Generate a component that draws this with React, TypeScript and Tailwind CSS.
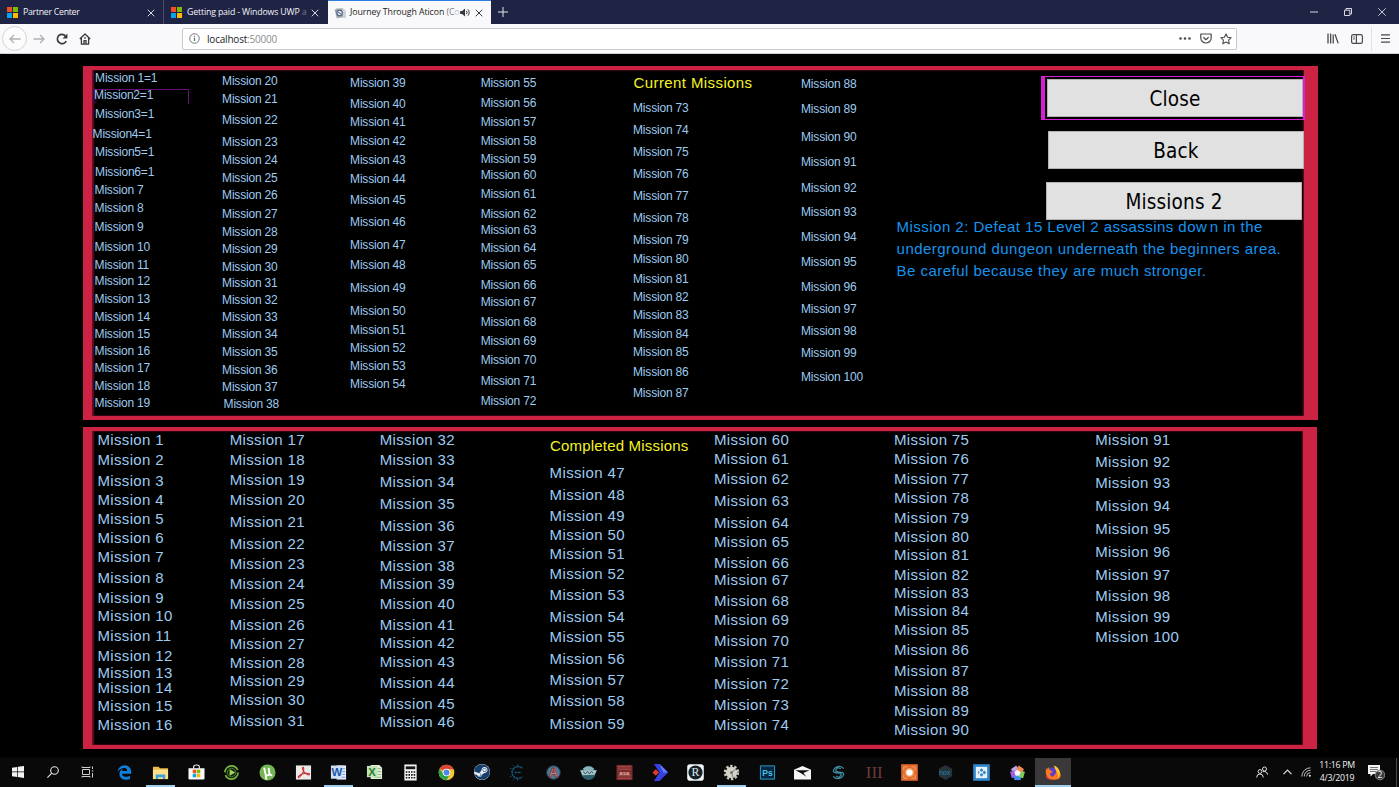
import type { ReactNode } from "react";
import { FaEdgeLegacy, FaSteam } from "react-icons/fa";
import clsx from "clsx";

type Entry = { label: string; y: number; shift?: number };

// Vertical centres are stage coordinates, one list per column
function missions(first: number, centres: number[]): Entry[] {
  return centres.map((y, i) => ({ label: `Mission ${first + i}`, y }));
}

const CURRENT_LEFT: Entry[] = [
  { label: "Mission 1=1", y: 77.5, shift: 0.5 },
  { label: "Mission2=1", y: 94.5, shift: -0.5 },
  { label: "Mission3=1", y: 114, shift: 0.5 },
  { label: "Mission4=1", y: 133.5, shift: -2 },
  { label: "Mission5=1", y: 152, shift: 0.5 },
  { label: "Mission6=1", y: 171.5, shift: 0.5 },
  ...missions(7, [190, 208, 227, 246.5, 264.5, 281, 299, 317, 333.5, 351, 368, 386, 402.5])
];

const CURRENT_20 = missions(
  20,
  [81, 99, 120, 142, 160, 178, 195, 214, 231.5, 249, 266.5, 282.5, 299.5, 316.5, 333.5, 351.5, 370, 386.5, 404]
).map((m) => (m.label === "Mission 38" ? { ...m, shift: 1.5 } : m));
const CURRENT_39 = missions(39, [83, 104, 122, 140.5, 160, 179, 200, 221.5, 244.5, 265, 288, 310.5, 330, 348, 366, 384]);
const CURRENT_55 = missions(
  55,
  [83, 102.5, 122, 141, 158.5, 174.5, 194, 213.5, 230, 248, 264.5, 284.5, 302, 322, 340.5, 359.5, 381, 401]
);
const CURRENT_73 = missions(73, [107.5, 130, 152, 174, 196, 217.5, 239.5, 258.5, 279, 296.5, 314.5, 333.5, 352, 372, 392.5]);
const CURRENT_88 = missions(88, [84, 109, 136.5, 162, 187.5, 211.5, 237, 262, 287, 309, 330.5, 353, 377]);

const DONE_1 = missions(1, [439.5, 460, 481, 500, 519, 538, 557, 578, 598, 616, 636, 656, 673, 688, 706, 725]);
const DONE_17 = missions(17, [439.5, 460, 480, 500, 522, 544, 564, 584, 604, 625, 644, 663, 681, 700, 721]);
const DONE_32 = missions(32, [439.5, 460, 482, 504, 526, 546, 566, 584, 604, 625, 643, 662, 683, 704, 722]);
const DONE_47 = missions(47, [473, 495, 516, 535, 554, 574, 595, 617, 637, 659, 680, 701, 723.5]);
const DONE_60 = missions(60, [439.5, 459, 479, 501, 523, 542, 563, 580, 601, 620, 641, 662, 684, 705, 725]);
const DONE_75 = missions(75, [439.5, 458.5, 479, 498, 517.5, 537, 555, 575, 593, 610.5, 630, 650, 671, 691, 711, 730]);
const DONE_91 = missions(91, [439.5, 462, 483, 506, 529, 552, 575, 596, 617, 637]);

const LINE = 16;

function MissionColumn({
  entries,
  top,
  heading,
  headingY = 0,
  headingClass
}: {
  entries: Entry[];
  top: number;
  heading?: string;
  headingY?: number;
  headingClass?: string;
}) {
  const rows: Entry[] = heading ? [{ label: heading, y: headingY, shift: 0.5 }, ...entries] : entries;
  return (
    <div className="flex flex-col items-start whitespace-nowrap">
      {rows.map((row, i) => {
        const prev = i === 0 ? top : rows[i - 1].y + LINE / 2;
        return (
          <span
            key={row.label}
            className={clsx("relative block h-4 leading-4", row.label === heading && ["text-[15px] text-[#f4f424]", headingClass])}
            style={{ marginTop: row.y - LINE / 2 - prev, marginLeft: row.shift ?? 0 }}
          >
            {row.label === "Mission2=1" && (
              <span className="absolute -left-px top-[2px] h-[15px] w-24 border-t border-r border-[#6a1178] bg-[linear-gradient(90deg,#3c0a45,transparent_5px)]" />
            )}
            <span className="relative">{row.label}</span>
          </span>
        );
      })}
    </div>
  );
}

function TabClose({ dark = false }: { dark?: boolean }) {
  return (
    <svg viewBox="0 0 8 8" className="size-[8px] shrink-0" fill="none" stroke={dark ? "#3a3a3e" : "#d5d6e2"} strokeWidth="1">
      <path d="M.7.7l6.6 6.6M7.3.7L.7 7.3" />
    </svg>
  );
}

function MicrosoftLogo() {
  return (
    <span className="grid size-[11px] shrink-0 grid-cols-2 gap-px">
      <span className="bg-[#f25022]" />
      <span className="bg-[#7fba00]" />
      <span className="bg-[#00a4ef]" />
      <span className="bg-[#ffb900]" />
    </span>
  );
}

function TabBar() {
  return (
    <div className="flex h-6 shrink-0 bg-[#1f2344] text-[8.75px] font-medium tracking-[-0.27px] whitespace-nowrap text-[#f4f4f8]">
      <div className="flex w-[164px] items-center border-r border-[#4a4d68] pt-px pr-[8px] pl-[7px]">
        <MicrosoftLogo />
        <span className="ml-[5px] flex-1">Partner Center</span>
        <TabClose />
      </div>
      <div className="flex w-[164px] items-center pt-px pr-[9px] pl-[7px]">
        <MicrosoftLogo />
        <span className="ml-[5px] tracking-[-0.15px]">
          Getting paid - Windows UWP <span className="text-[#73768c]">a</span>
        </span>
        <span className="ml-auto flex">
          <TabClose />
        </span>
      </div>
      <div className="flex w-[163px] items-center border-t border-[#2a7de1] bg-[#f9f9fb] pr-[8px] pl-[6px] text-[#1c1c20]">
        <svg viewBox="0 0 12 12" className="size-[12px] shrink-0">
          <path d="M2 1h7l3 3v7H3z" fill="#cfd3d8" />
          <path d="M.5 2.5L8 1.5l1 8-6 2z" fill="#9aa4b0" />
          <circle cx="5.6" cy="6" r="2.7" fill="#e8edf3" stroke="#53627a" strokeWidth="1.1" />
          <path d="M4 5l3 2" stroke="#2a5d9f" />
        </svg>
        <span className="ml-[4px] tracking-[-0.08px]">
          Journey Through Aticon <span className="text-[#77777b]">(C</span>
          <span className="text-[#c4c4c8]">o</span>
        </span>
        <svg viewBox="0 0 12 10" className="ml-auto h-[9px] w-[11px] shrink-0">
          <path d="M0 3.2h2.2L5.5.5v9L2.2 6.8H0z" fill="#38383d" />
          <path d="M7 3.2a2.6 2.6 0 010 3.6M8.6 1.4a5 5 0 010 7.2" fill="none" stroke="#38383d" strokeWidth="1.1" />
        </svg>
        <span className="ml-[4px] flex">
          <TabClose dark />
        </span>
      </div>
      <svg viewBox="0 0 10 10" className="mt-[7px] ml-[7px] size-[10px]" stroke="#e4e5ee" strokeWidth="1">
        <path d="M5 0v10M0 5h10" />
      </svg>
      <div className="ml-auto flex items-center pr-[13px]">
        <svg viewBox="0 0 8 8" className="size-[8px]" stroke="#d8d9e4" strokeWidth="1">
          <path d="M0 4h8" />
        </svg>
        <svg viewBox="0 0 8 8" className="ml-[26px] size-[8px]" fill="none" stroke="#d8d9e4" strokeWidth="1">
          <path d="M.5 2.2h5.3v5.3H.5zM2 2V.5h5.5V6H6" />
        </svg>
        <svg viewBox="0 0 8 8" className="ml-[26px] size-[8px]" fill="none" stroke="#d8d9e4" strokeWidth=".9">
          <path d="M.3.3l7.4 7.4M7.7.3L.3 7.7" />
        </svg>
      </div>
    </div>
  );
}

function NavBar() {
  return (
    <div className="flex h-[30px] shrink-0 items-center border-b border-[#d0d0d4] bg-[#f9f9fb]">
      <span className="ml-[2px] flex size-[25px] items-center justify-center rounded-full border border-[#d4d4d6] bg-[#fcfcfd]">
        <svg viewBox="0 0 12 10" className="h-[10px] w-[12px]" fill="none" stroke="#b0b0b3" strokeWidth="1.3">
          <path d="M11.5 5H1M5 1L1 5l4 4" />
        </svg>
      </span>
      <svg viewBox="0 0 12 10" className="ml-[6px] h-[10px] w-[12px]" fill="none" stroke="#b0b0b3" strokeWidth="1.3">
        <path d="M.5 5H11M7 1l4 4-4 4" />
      </svg>
      <svg viewBox="0 0 12 12" className="ml-[11px] size-[12px]" fill="none" stroke="#38383d" strokeWidth="1.6">
        <path d="M10.2 8A4.6 4.6 0 116 1.4c1.6 0 2.8.8 3.7 2" />
        <path d="M11.4.6v4.8H6.6z" fill="#38383d" stroke="none" />
      </svg>
      <svg viewBox="0 0 12 12" className="ml-[11px] size-[12px]" fill="none" stroke="#38383d" strokeWidth="1.3" strokeLinejoin="round">
        <path d="M.8 6L6 1l5.2 5M2.4 5.3v5.9h7.2V5.3" />
        <path d="M5 11V7.6h2V11M5.2 5h1.6" />
      </svg>
      <div className="ml-[91px] flex h-[22px] w-[1055px] items-center rounded-[2px] border border-[#c9c9cd] bg-white">
        <svg viewBox="0 0 12 12" className="ml-[6px] size-[11px]" fill="none" stroke="#6a6a6e" strokeWidth="1">
          <circle cx="6" cy="6" r="5.2" />
          <path d="M6 5.2v3.6M6 3v1.2" strokeWidth="1.3" />
        </svg>
        <span className="ml-[7px] pt-px text-[10px] tracking-[-0.2px] text-[#1c1c20]">
          localhost<span className="text-[#8b8b8f]">:50000</span>
        </span>
        <svg viewBox="0 0 12 3" className="ml-auto h-[3px] w-[12px]" fill="#4a4a4f">
          <circle cx="1.5" cy="1.5" r="1.3" />
          <circle cx="6" cy="1.5" r="1.3" />
          <circle cx="10.5" cy="1.5" r="1.3" />
        </svg>
        <svg viewBox="0 0 12 11" className="ml-[9px] h-[11px] w-[12px]" fill="none" stroke="#4a4a4f" strokeWidth="1.2" strokeLinejoin="round">
          <path d="M.8 1h10.4v4a5.2 5 0 01-10.4 0z" />
          <path d="M3.4 4.2L6 6.7l2.600-2.500" />
        </svg>
        <svg viewBox="0 0 12 12" className="mr-[4px] ml-[8px] size-[12px]" fill="none" stroke="#4a4a4f" strokeWidth="1.1" strokeLinejoin="round">
          <path d="M6 .9l1.600 3.300 3.600.5-2.600 2.500.6 3.600L6 9.100l-3.200 1.700.6-3.600L.8 4.700l3.600-.5z" />
        </svg>
      </div>
      <svg viewBox="0 0 12 11" className="ml-[90px] h-[11px] w-[12px]" fill="none" stroke="#4a4a4f" strokeWidth="1.3">
        <path d="M1 .5v10M3.6 .5v10M6.2 1.5v9M8 1.2l3.2 9.2" />
      </svg>
      <svg viewBox="0 0 12 10" className="ml-[12px] h-[10px] w-[12px]" fill="none" stroke="#4a4a4f" strokeWidth="1.2">
        <rect x=".6" y=".6" width="10.8" height="8.8" rx="1.6" />
        <path d="M5.4.8v8.4M2.2 3h1.6M2.2 5h1.6" />
      </svg>
      <span className="ml-[8px] h-[24px] w-px bg-[#e2e2e5]" />
      <svg viewBox="0 0 10 10" className="ml-[9px] size-[9px]" stroke="#4a4a4f" strokeWidth="1.3">
        <path d="M0 1h10M0 5h10M0 9h10" />
      </svg>
    </div>
  );
}

function GameButton({ children, className }: { children: ReactNode; className?: string }) {
  return (
    <button
      type="button"
      className={clsx(
        "relative h-[38px] w-[256px] shrink-0 border border-[#b4b4b4] bg-[#e1e1e1] pt-[3px] font-['DejaVu_Sans_Condensed','DejaVu_Sans',sans-serif] text-[20.5px] leading-none tracking-[0.15px] text-black [font-stretch:condensed]",
        className
      )}
    >
      {children}
    </button>
  );
}

function CurrentMissions() {
  return (
    <section className="flex h-[354px] w-[1235px] border-x-[9px] border-y-4 border-r-[14px] border-[#cc2244] pl-[2.600px] text-xs tracking-[-0.2px] text-[#9fcbf0] shadow-[inset_2px_0_2px_#6a1122,inset_-1px_0_2px_#6a1122]">
      <div className="grid grid-cols-[127.5px_128px_130.7px_152.3px_168px_95.5px]">
        <MissionColumn entries={CURRENT_LEFT} top={70} />
        <MissionColumn entries={CURRENT_20} top={70} />
        <MissionColumn entries={CURRENT_39} top={70} />
        <MissionColumn entries={CURRENT_55} top={70} />
        <MissionColumn entries={CURRENT_73} top={70} heading="Current Missions" headingY={83} headingClass="tracking-[0.4px]" />
        <MissionColumn entries={CURRENT_88} top={70} />
      </div>
      <div className="flex flex-1 flex-col items-end">
        <div className="relative mt-[9px] mr-px flex">
          {/* selection frame, heavier on the left */}
          <span className="absolute -top-[3px] -right-[2px] -bottom-[3px] -left-[6px] border border-r-2 border-l-4 border-[#d81fd8]" />
          <GameButton>Close</GameButton>
        </div>
        <GameButton className="mt-[14px]">Back</GameButton>
        <GameButton className="mt-[13px] mr-[2px]">Missions 2</GameButton>
        <p className="relative -mt-1 w-full text-[15px] leading-[22px] tracking-[0.47px] whitespace-nowrap text-[#1694ee]">
          Mission 2: Defeat 15 Level 2 assassins do<span className="mr-[2.500px]">w</span>n in the
          <br />
          underground dungeon underneath the beginners area.
          <br />
          Be careful because they are much stronger.
        </p>
      </div>
    </section>
  );
}

function CompletedMissions() {
  return (
    <section className="mt-[7px] flex h-[322px] w-[1234px] border-x-[9px] border-y-4 border-r-[14px] border-[#cc2244] pl-[5.400px] text-[15px] tracking-[0.36px] text-[#9fcbf0] shadow-[inset_2px_0_2px_#6a1122,inset_-1px_0_2px_#6a1122]">
      <div className="grid grid-cols-[132.3px_150px_169.9px_164.4px_180px_201.3px_120px]">
        <MissionColumn entries={DONE_1} top={431} />
        <MissionColumn entries={DONE_17} top={431} />
        <MissionColumn entries={DONE_32} top={431} />
        <MissionColumn entries={DONE_47} top={431} heading="Completed Missions" headingY={446} headingClass="tracking-[0.18px]" />
        <MissionColumn entries={DONE_60} top={431} />
        <MissionColumn entries={DONE_75} top={431} />
        <MissionColumn entries={DONE_91} top={431} />
      </div>
    </section>
  );
}

function Glyph({ children }: { children: ReactNode }) {
  return (
    <svg viewBox="0 0 18 18" className="size-[17px] font-['Liberation_Sans',sans-serif]">
      {children}
    </svg>
  );
}

const APPS: { name: string; open?: boolean; icon: ReactNode }[] = [
  { name: "edge", icon: <FaEdgeLegacy className="size-[15px] text-[#0f7fdc]" /> },
  {
    name: "explorer",
    open: true,
    icon: (
      <Glyph>
        <path d="M1 3h6l1.5 1.5H17V16H1z" fill="#e9b94a" />
        <path d="M1 6h16v10H1z" fill="#fbe08a" />
        <path d="M4 16v-5h10v5h-2.5v-2h-5v2z" fill="#3aa0de" />
      </Glyph>
    )
  },
  {
    name: "store",
    icon: (
      <Glyph>
        <path d="M6 5V3q0-2 3-2t3 2v2" fill="none" stroke="#f4f4f4" strokeWidth="1.2" />
        <path d="M.5 4.5h17V15q0 1.5-1.5 1.5H2Q.5 16.500.5 15z" fill="#f8f8f8" />
        <path d="M5 6h3.700v3.700H5z" fill="#f25022" />
        <path d="M9.300 6H13v3.700H9.300z" fill="#7fba00" />
        <path d="M5 10.300h3.700V14H5z" fill="#00a4ef" />
        <path d="M9.300 10.300H13V14H9.300z" fill="#ffb900" />
      </Glyph>
    )
  },
  {
    name: "player",
    icon: (
      <Glyph>
        <circle cx="9" cy="9" r="7" fill="#10180a" stroke="#7ab648" strokeWidth="1.700" strokeDasharray="19 3" />
        <circle cx="9" cy="9" r="4.500" fill="#1a2610" stroke="#4f7f2c" />
        <path d="M7 5.500L13 9l-6 3.500z" fill="#9bd85f" />
      </Glyph>
    )
  },
  {
    name: "utorrent",
    icon: (
      <Glyph>
        <circle cx="9" cy="9" r="8.500" fill="#74b752" />
        <path d="M5.500 4l1.200 6q.5 2.300 2.500 2t1.800-2.600L10.200 4M11 9.500q.5 3 3 2.200M7 12l.8 4.500" fill="none" stroke="#fff" strokeWidth="2" />
      </Glyph>
    )
  },
  {
    name: "pdf",
    icon: (
      <Glyph>
        <path d="M1 1.500h16v15H1z" fill="#ece9e9" />
        <path d="M8.500 3.500c-1.500 0 0 4 2 6s5 2.700 5 1.400-5-1.400-8-.2-5 3.500-3.700 3.600S9 9 9.200 6.500 9 3.500 8.500 3.500z" fill="none" stroke="#c9302c" strokeWidth="1.100" />
      </Glyph>
    )
  },
  {
    name: "word",
    open: true,
    icon: (
      <Glyph>
        <path d="M7 1.500h10v15H7z" fill="#e8eef8" />
        <path d="M11 5h5M11 8h5M11 11h5M11 14h5" stroke="#6f96cf" />
        <path d="M1 1.500h13l-1.500 14H1z" fill="#cfe0f5" />
        <text x="1.500" y="13" fontSize="12" fontWeight="700" fill="#1c55ac">W</text>
      </Glyph>
    )
  },
  {
    name: "excel",
    icon: (
      <Glyph>
        <path d="M5 1h9l3 3v12H5z" fill="#e5f0e0" />
        <path d="M12 5h4M12 8h4M12 11h4M9 14h7" stroke="#7fb56e" />
        <path d="M1 2h11v12H1z" fill="#c3e3b6" />
        <text x="2.500" y="13" fontSize="12" fontWeight="700" fill="#2b7d2f">X</text>
      </Glyph>
    )
  },
  {
    name: "calculator",
    icon: (
      <Glyph>
        <path d="M2.500.5h13v17h-13z" fill="#f4f4f4" />
        <path d="M4 2.500h10v3H4z" fill="#161616" />
        <path d="M4 8.500h10M4 11.500h10M4 14.500h10" stroke="#161616" strokeWidth="1.700" strokeDasharray="1.700 1.060" />
      </Glyph>
    )
  },
  {
    name: "chrome",
    icon: (
      <Glyph>
        <circle cx="9" cy="9" r="8.300" fill="#f2c52c" />
        <path d="M9 9L1.800 5A8.300 8.300 0 0116.500 5.500H9z" fill="#dc4535" />
        <path d="M1.800 5A8.300 8.300 0 009 17.300l3.500-6.300H6z" fill="#2da14e" />
        <circle cx="9" cy="9" r="4" fill="#fff" />
        <circle cx="9" cy="9" r="3.100" fill="#4a87ea" />
      </Glyph>
    )
  },
  {
    name: "steam",
    icon: (
      <span className="flex rounded-full bg-[#e8eef4]">
        <FaSteam className="size-[16px] text-[#173f6b]" />
      </span>
    )
  },
  {
    name: "engine",
    icon: (
      <Glyph>
        <path d="M14 4.500A6.300 6.300 0 1014 13.500M6 9h7" fill="none" stroke="#16587c" strokeWidth="1.800" strokeDasharray="2.400 .7" />
        <path d="M5 2L4 1M2.500 5L1 4.500M2.500 13L1 13.500M5 16l-1 1M9 2V.5M9 16v1.500" stroke="#16587c" />
      </Glyph>
    )
  },
  {
    name: "anthem",
    icon: (
      <Glyph>
        <circle cx="9" cy="9" r="7.200" fill="#4a7a94" stroke="#263c50" />
        <text x="4" y="14" fontSize="13.500" fontWeight="700" fill="#d3a9a4" stroke="#8a2c33" strokeWidth=".8">A</text>
      </Glyph>
    )
  },
  {
    name: "globe",
    icon: (
      <Glyph>
        <circle cx="9" cy="9.500" r="7.500" fill="#2f5f6c" />
        <path d="M3 5Q9 0 15 5l-2 2H5z" fill="#86b4ba" />
        <path d="M0 6.500h18l-2.500 5-13 .5z" fill="#a8c4c6" />
        <path d="M3.500 8l2 2.500L8 8l2 2.500L12 8l2 1.500" fill="none" stroke="#244b56" />
      </Glyph>
    )
  },
  {
    name: "brick",
    icon: (
      <Glyph>
        <path d="M.5 1h17v16H.5z" fill="#7d2b2b" />
        <path d="M2 3h14M2 15h14M2 5.500h14M2 12.500h14" stroke="#b86e68" strokeWidth=".7" />
        <text x="3.500" y="11.500" fontSize="6.500" fontWeight="700" fill="#e0b5ae">asa</text>
      </Glyph>
    )
  },
  {
    name: "arrow",
    icon: (
      <Glyph>
        <path d="M2 0h6l9 9-9 9H2l6-9z" fill="#3542e0" />
        <path d="M8 0l9 9h-5z" fill="#6679ff" />
        <path d="M.5 9l3.500-3.500L7.500 9 4 12.500z" fill="#e23a2e" />
      </Glyph>
    )
  },
  {
    name: "ring",
    icon: (
      <Glyph>
        <rect x=".2" y=".2" width="17.600" height="17.600" rx="3" fill="#f2f4f5" />
        <circle cx="9" cy="9" r="7.500" fill="#16222b" />
        <text x="4.700" y="13.200" fontSize="12.500" fill="#dfe5e8" className="font-['Liberation_Serif',serif]">R</text>
      </Glyph>
    )
  },
  {
    name: "settings",
    open: true,
    icon: (
      <Glyph>
        <circle cx="9" cy="9" r="6.900" fill="none" stroke="#c9c8c0" strokeWidth="2.500" strokeDasharray="2.500 1.830" />
        <circle cx="9" cy="9" r="3.900" fill="#77766e" stroke="#d4d3ca" strokeWidth="4.500" />
        <path d="M9 9l5-4M9 9l2 6" stroke="#77766e" />
      </Glyph>
    )
  },
  {
    name: "photoshop",
    icon: (
      <Glyph>
        <path d="M1.500 2h15v14h-15z" fill="#06263f" stroke="#2aa3d6" />
        <text x="3.500" y="12.500" fontSize="9" fontWeight="700" fill="#4cc0ea">Ps</text>
      </Glyph>
    )
  },
  {
    name: "mail",
    icon: (
      <Glyph>
        <path d="M0 6l9-4 9 4v10.500H0z" fill="#f6f6f6" />
        <path d="M1.500 6.500h15L10 9.500l3 4-5-3.500z" fill="#0b0b0b" />
      </Glyph>
    )
  },
  {
    name: "swirl",
    icon: (
      <Glyph>
        <path
          d="M14.500 5A6.200 6.200 0 003.500 7.500q.5 2 5 2T11.500 12 9 14 6.500 13M3.500 13A6.200 6.200 0 0014.500 10.500q-.5-2-5-2T6.500 6 9 4t2.500 1"
          fill="none"
          stroke="#3d8fa6"
          strokeWidth="1.300"
        />
      </Glyph>
    )
  },
  {
    name: "three",
    icon: <span className="font-['Liberation_Serif',serif] text-[17px] leading-none text-[#6b3a3a]">III</span>
  },
  {
    name: "orange",
    icon: (
      <Glyph>
        <path d="M.2.2h17.600v17.600H.2z" fill="#e0692a" />
        <path d="M3 3h4M11 3h4M3 15h4M11 15h4M3 3v4M15 3v4M3 11v4M15 11v4" stroke="#f4a26c" />
        <circle cx="9" cy="9" r="4.800" fill="#f2a067" />
        <circle cx="9" cy="9" r="3.300" fill="#fff" />
      </Glyph>
    )
  },
  {
    name: "nox",
    icon: (
      <Glyph>
        <path d="M9 1l7 4v8l-7 4-7-4V5z" fill="#26313a" />
        <text x="2" y="11.500" fontSize="7.500" fill="#1b8ba8">nox</text>
      </Glyph>
    )
  },
  {
    name: "kodi",
    icon: (
      <Glyph>
        <path d="M.2.2h17.600v17.600H.2z" fill="#2f86cb" />
        <path d="M3 3h12v12H3z" fill="#e6f1fa" />
        <path d="M9 4.500l2 2-2 2-2-2zM9 9.500l2 2-2 2-2-2zM12 7l2 2-2 2-2-2zM5.500 7l1.500 2-1.500 2z" fill="#2f86cb" />
      </Glyph>
    )
  },
  {
    name: "pentagon",
    icon: (
      <Glyph>
        <path d="M9 3.500L3.500 7.500" stroke="#b9a5f0" strokeWidth="5" />
        <path d="M3.500 7.500l2 7" stroke="#a05fe0" strokeWidth="5" />
        <path d="M5.500 14.500h7" stroke="#3f8ff0" strokeWidth="5" />
        <path d="M12.500 14.500l2-7" stroke="#79cf5b" strokeWidth="5" />
        <path d="M14.500 7.500L9 3.500" stroke="#f08a4e" strokeWidth="5" />
        <path d="M9 6l3.300 2.500-1.300 4H7l-1.300-4z" fill="#fff" />
      </Glyph>
    )
  },
  {
    name: "firefox",
    open: true,
    icon: (
      <Glyph>
        <circle cx="9" cy="9.500" r="6" fill="#5b3fc4" />
        <path d="M3 4q-2.500 5 .3 9.300T13 16.500t3.500-8.500q-1-4-6-6.500 3 3 2.500 6.500T10 13t-4-3l3-1.200Q9 7 6.500 6.500 5 6 5 3.500 3.500 4 3.500 6z" fill="#ff7a1f" />
        <path d="M10.500 1.500q5 2 6 6.500t-2 7q1-4-1-7T10.500 1.500z" fill="#ffc928" />
        <path d="M2 10q1.500 6 7 6.800-5 .7-7-2.800z" fill="#e8304f" />
      </Glyph>
    )
  }
];

function Taskbar() {
  return (
    <footer className="flex h-[30px] shrink-0 border-t border-[#050505] bg-[#0a0909] text-[#f0f0f0]">
      <div className="flex w-[107px] items-center pr-[2px] pb-px">
        <span className="flex w-[35px] justify-center">
          <svg viewBox="0 0 12 12" className="size-[12px]" fill="#f4f4f4">
            <path d="M0 1.700l5.300-.8v4.700H0zM6 .8L12 0v5.600H6zM0 6.300h5.300V11L0 10.300zM6 6.300h6V12l-6-.9z" />
          </svg>
        </span>
        <span className="flex w-[35px] justify-center">
          <svg viewBox="0 0 12 12" className="size-[12px]" fill="none" stroke="#e6e6e6" strokeWidth="1.100">
            <circle cx="7.500" cy="4.500" r="3.800" />
            <path d="M4.800 7.200L.4 11.600" />
          </svg>
        </span>
        <span className="flex w-[35px] justify-center">
          <svg viewBox="0 0 13 12" className="h-[12px] w-[13px]" fill="none" stroke="#cfcfcf" strokeWidth="1">
            <path d="M1.500 3.500h7v5h-7zM1 .5v1h8v-1M1 11.500v-1h8v1M11.500.5v2.500M11.500 7v4.500M10.700 5h1.700" />
          </svg>
        </span>
      </div>
      {APPS.map((app) => (
        <div
          key={app.name}
          className={clsx(
            "flex w-[35.7px] shrink-0 items-center justify-center border-[#9ccfee]",
            app.name === "firefox" && "border-b-2 bg-[#3a3838]"
          )}
        >
          <span
            className={clsx(
              "flex h-full w-[29px] items-center justify-center",
              app.open ? "pt-px" : "pb-px",
              app.open && app.name !== "firefox" && "border-b-2 border-[#9ccfee]"
            )}
          >
            {app.icon}
          </span>
        </div>
      ))}
      <div className="ml-auto flex items-center pb-px">
        <svg viewBox="0 0 12 12" className="size-[12px]" fill="none" stroke="#dedede" strokeWidth="1">
          <circle cx="4" cy="5.500" r="1.900" />
          <circle cx="8.500" cy="3" r="2" />
          <path d="M.6 11.500Q.8 8 4 8t3.300 3.500M7 5.700q4-1 4.500 3" />
        </svg>
        <svg viewBox="0 0 9 6" className="ml-[15px] h-[6px] w-[9px]" fill="none" stroke="#dedede" strokeWidth="1.200">
          <path d="M.5 5.200l4-4 4 4" />
        </svg>
        <svg viewBox="0 0 10 10" className="ml-[9px] size-[10px]" fill="none" stroke="#bdbdbd" strokeWidth="1">
          <path d="M.8 9.500A8.700 8.700 0 019.500.8M3.200 9.500a6.300 6.300 0 016.300-6.300M5.600 9.500a3.900 3.900 0 013.900-3.900" />
          <circle cx="8.800" cy="8.800" r="1" fill="#eee" stroke="none" />
        </svg>
        <div className="ml-[4px] w-[44px] text-center text-[8.75px] leading-[13px] tracking-[-0.25px] whitespace-nowrap">
          11:16 PM
          <br />
          4/3/2019
        </div>
        <svg viewBox="0 0 18 18" className="ml-[8px] size-[18px] font-['Open_Sans',sans-serif]">
          <path d="M1 2h12v9H6l-2.500 2.500V11H1z" fill="#f4f4f4" />
          <path d="M3 4.500h8M3 6.500h8M3 8.500h6" stroke="#555" strokeWidth=".8" />
          <circle cx="13" cy="12" r="4.800" fill="#3a3a3a" stroke="#9a9a9a" strokeWidth=".8" />
          <text x="13" y="15" fontSize="8.500" textAnchor="middle" fill="#fff">2</text>
        </svg>
        <span className="ml-[11px] h-[29px] w-px bg-[#4a4a4a]" />
        <span className="w-[2px]" />
      </div>
    </footer>
  );
}

export default function App() {
  return (
    <div className="flex h-screen w-screen flex-col overflow-hidden bg-black font-['Open_Sans','Noto_Sans',sans-serif]">
      <TabBar />
      <NavBar />
      <main className="flex-1 pt-3 pl-[83px] font-['Liberation_Sans',Arial,sans-serif]">
        <CurrentMissions />
        <CompletedMissions />
      </main>
      <Taskbar />
    </div>
  );
}
